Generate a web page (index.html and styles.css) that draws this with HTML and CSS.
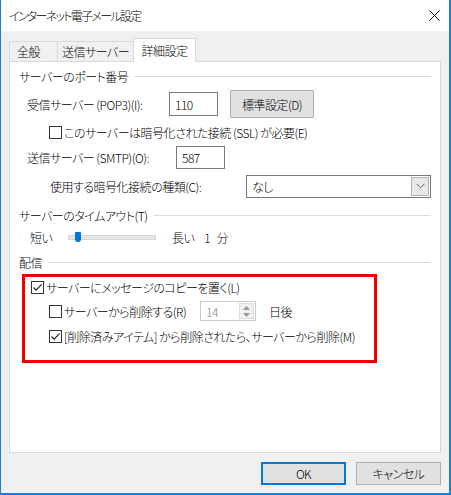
FILE: index.html
```html
<!DOCTYPE html>
<html lang="ja">
<head>
    <meta charset="UTF-8">
    <title>インターネット電子メール設定</title>
    <link rel="stylesheet" href="styles.css">
</head>
<body>
    <div class="window">
        <!-- Title bar -->
        <div class="titlebar">
            <span class="title">インターネット電子メール設定</span>
            <svg class="close" width="11" height="11" viewBox="0 0 11 11">
                <path d="M0.5 0.5 L10.5 10.5 M10.5 0.5 L0.5 10.5" stroke="#111" stroke-width="1" fill="none"/>
            </svg>
        </div>

        <div class="client">
            <!-- Tabs -->
            <div class="tabs">
                <div class="tab tab-general">全般</div>
                <div class="tab tab-outgoing">送信サーバー</div>
                <div class="tab tab-active">詳細設定</div>
            </div>

            <div class="panel">
                <!-- Ports -->
                <div class="group-head"><span>サーバーのポート番号</span><i class="rule"></i></div>
                <div class="row row-pop">
                    <span class="pop-label">受信サーバー (POP3)(I):</span>
                    <div class="textbox">110</div>
                    <div class="btn btn-default">標準設定(D)</div>
                </div>
                <div class="row row-ssl">
                    <span class="checkbox"></span>
                    <span>このサーバーは暗号化された接続 (SSL) が必要(E)</span>
                </div>
                <div class="row row-smtp">
                    <span class="smtp-label">送信サーバー (SMTP)(O):</span>
                    <div class="textbox">587</div>
                </div>
                <div class="row row-enc">
                    <span class="enc-label">使用する暗号化接続の種類(C):</span>
                    <div class="select">
                        <span class="select-value">なし</span>
                        <span class="select-btn">
                            <svg width="9" height="6" viewBox="0 0 9 6">
                                <path d="M0.5 0.8 L4.5 4.8 L8.5 0.8" stroke="#606060" stroke-width="1" fill="none"/>
                            </svg>
                        </span>
                    </div>
                </div>

                <!-- Timeout -->
                <div class="group-head group-timeout"><span>サーバーのタイムアウト(T)</span><i class="rule"></i></div>
                <div class="row row-slider">
                    <span class="short-label">短い</span>
                    <div class="track"><span class="thumb"></span></div>
                    <span class="long-label">長い</span>
                    <span class="minutes">1 分</span>
                </div>

                <!-- Delivery -->
                <div class="group-head group-delivery"><span>配信</span><i class="rule"></i></div>
                <div class="highlight">
                    <div class="row hl-row">
                        <span class="checkbox checked">
                            <svg width="11" height="11" viewBox="0 0 11 11">
                                <path d="M1.5 5.5 L4.2 8.2 L9.6 2.4" stroke="#222" stroke-width="1.2" fill="none"/>
                            </svg>
                        </span>
                        <span>サーバーにメッセージのコピーを置く(L)</span>
                    </div>
                    <div class="row hl-row hl-sub hl-delete">
                        <span class="delete-label">
                            <span class="checkbox"></span>
                            <span>サーバーから削除する(R)</span>
                        </span>
                        <div class="spin">
                            <span class="spin-value">14</span>
                            <span class="spin-btns">
                                <svg width="7" height="4" viewBox="0 0 7 4"><path d="M0 4 L3.5 0 L7 4 Z" fill="#9a9a9a"/></svg>
                                <svg width="7" height="4" viewBox="0 0 7 4"><path d="M0 0 L3.5 4 L7 0 Z" fill="#9a9a9a"/></svg>
                            </span>
                        </div>
                        <span class="days">日後</span>
                    </div>
                    <div class="row hl-row hl-sub hl-trash">
                        <span class="checkbox checked">
                            <svg width="11" height="11" viewBox="0 0 11 11">
                                <path d="M1.5 5.5 L4.2 8.2 L9.6 2.4" stroke="#222" stroke-width="1.2" fill="none"/>
                            </svg>
                        </span>
                        <span>[削除済みアイテム] から削除されたら、サーバーから削除(M)</span>
                    </div>
                </div>
            </div>

            <!-- Dialog buttons -->
            <div class="buttons">
                <div class="btn btn-ok">OK</div>
                <div class="btn btn-cancel">キャンセル</div>
            </div>
        </div>
    </div>
</body>
</html>
```

FILE: styles.css
```css
* {
    box-sizing: border-box;
}
body {
    margin: 0;
    font-family: "Noto Sans CJK JP", "Noto Sans", sans-serif;
    font-size: 12px;
    font-weight: 300;
    font-feature-settings: "palt";
    letter-spacing: -0.5px;
    color: #000;
    background: #fff;
}
.window {
    width: 451px;
    height: 495px;
    border-left: 1px solid #1a7fd6;
    border-right: 2px solid #1a7fd6;
    border-bottom: 2px solid #1a7fd6;
    background: #f0f0f0;
    display: flex;
    flex-direction: column;
}
.titlebar {
    height: 31px;
    background: #fff;
    display: flex;
    align-items: center;
    justify-content: space-between;
    padding: 0 9px 0 8px;
}
.title {
    font-size: 12px;
    letter-spacing: -1.7px;
}
.client {
    flex: 1;
    display: flex;
    flex-direction: column;
    padding: 7px 8px 8px 8px;
}

/* Tabs */
.tabs {
    height: 23px;
    display: flex;
    align-items: flex-end;
}
.tab {
    height: 20px;
    border: 1px solid #d9d9d9;
    border-bottom: none;
    background: #f0f0f0;
    display: flex;
    align-items: center;
    justify-content: center;
}
.tab + .tab {
    margin-left: -1px;
}
.tab-general {
    width: 49px;
    justify-content: flex-start;
    padding-left: 7px;
}
.tab-outgoing {
    width: 77px;
}
.tab-active {
    width: 63px;
    height: 24px;
    margin-bottom: -1px;
    background: #fff;
    z-index: 1;
}

/* Panel */
.panel {
    flex: 1;
    background: #fff;
    border: 1px solid #d9d9d9;
    padding: 6px 9px 0 9px;
    display: flex;
    flex-direction: column;
}
.group-head {
    height: 16px;
    display: flex;
    align-items: center;
}
.rule {
    flex: 1;
    height: 1px;
    background: #dcdcdc;
    margin-left: 6px;
}
.group-timeout {
    margin-top: 9px;
}
.group-delivery {
    margin-top: 9px;
}
.row {
    display: flex;
    align-items: center;
}
.row-pop {
    height: 28px;
    margin-top: 6px;
}
.pop-label {
    width: 150px;
    padding-left: 8px;
}
.textbox {
    width: 49px;
    height: 24px;
    border: 1px solid #7a7a7a;
    background: #fff;
    padding-left: 5px;
    display: flex;
    align-items: center;
}
.btn {
    height: 23px;
    width: 85px;
    border: 1px solid #adadad;
    background: #e1e1e1;
    display: flex;
    align-items: center;
    justify-content: center;
}
.btn-default {
    height: 28px;
    width: 84px;
    margin-left: 12px;
}
.row-ssl {
    height: 16px;
    margin-top: 6px;
    padding-left: 30px;
}
.checkbox {
    width: 13px;
    height: 13px;
    border: 1px solid #333;
    background: #fff;
    margin-right: 2px;
    display: flex;
    align-items: center;
    justify-content: center;
    flex-shrink: 0;
}
.row-smtp {
    height: 24px;
    margin-top: 5px;
}
.smtp-label {
    width: 157px;
    padding-left: 8px;
}
.row-smtp .textbox {
    height: 23px;
}
.row-enc {
    height: 24px;
    margin-top: 5px;
}
.enc-label {
    width: 227px;
    padding-left: 31px;
}
.select {
    flex: 1;
    height: 23px;
    border: 1px solid #7a7a7a;
    background: #fff;
    display: flex;
    align-items: center;
    justify-content: space-between;
    padding: 1px;
}
.select-value {
    padding-left: 4px;
}
.select-btn {
    width: 18px;
    height: 19px;
    border: 1px solid #b4b4b4;
    background: #e8e8e8;
    display: flex;
    align-items: center;
    justify-content: center;
}

/* Timeout slider */
.row-slider {
    height: 16px;
    margin-top: 6px;
}
.short-label {
    width: 49px;
    padding-left: 11px;
}
.track {
    width: 88px;
    height: 5px;
    border: 1px solid #d6d6d6;
    background: #e7e7e7;
    position: relative;
}
.thumb {
    position: absolute;
    left: 6px;
    top: -4px;
    width: 6px;
    height: 10px;
    background: #0078d7;
    border-radius: 1px 1px 3px 3px;
}
.long-label {
    margin-left: 16px;
}
.minutes {
    margin-left: 10px;
    word-spacing: 4px;
}

/* Red highlight box */
.highlight {
    width: 355px;
    height: 89px;
    margin: 4px 0 0 3px;
    border: 3px solid #f20000;
    padding: 0 0 0 6px;
    display: flex;
    flex-direction: column;
}
.hl-row {
    height: 20px;
}
.hl-sub {
    padding-left: 18px;
}
.hl-delete {
    margin-top: 4px;
}
.hl-trash {
    margin-top: 5px;
}
.delete-label {
    width: 151px;
    display: flex;
    align-items: center;
}
.spin {
    width: 56px;
    height: 20px;
    border: 1px solid #cccccc;
    display: flex;
    align-items: stretch;
    justify-content: space-between;
    padding: 1px;
}
.spin-value {
    color: #838383;
    padding-left: 4px;
    display: flex;
    align-items: center;
}
.spin-btns {
    width: 15px;
    background: #f0f0f0;
    border: 1px solid #dcdcdc;
    display: flex;
    flex-direction: column;
    align-items: center;
    justify-content: space-around;
}
.days {
    margin-left: 13px;
}

/* Dialog buttons */
.buttons {
    height: 23px;
    margin-top: 9px;
    display: flex;
    justify-content: flex-end;
    gap: 10px;
}
.btn-ok {
    border: 2px solid #0078d7;
}
```
